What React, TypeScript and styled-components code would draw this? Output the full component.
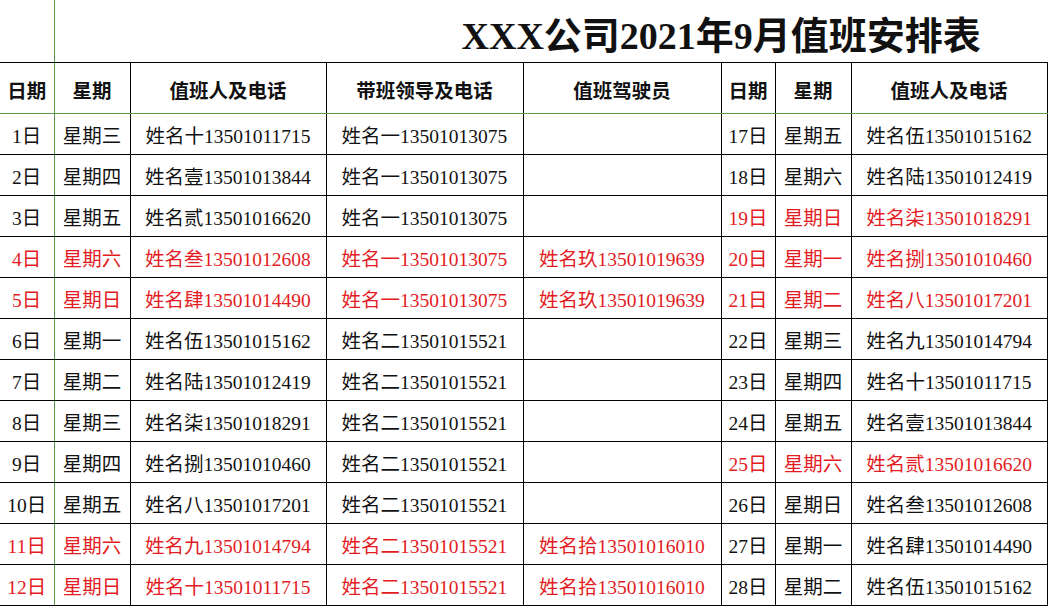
import styled, { createGlobalStyle } from "styled-components";

const GREEN = "#5b9a47";
const RED = "#e31c24";
const INK = "#111";

const GlobalStyle = createGlobalStyle`
  body {
    margin: 0;
    background: #fff;
  }
`;

const Sheet = styled.table`
  border-collapse: collapse;
  table-layout: fixed;
  width: 1047px;
  font-family: "Liberation Serif", "Noto Sans CJK SC", serif;
  color: ${INK};
`;

const TitleRow = styled.tr`
  height: 62px;
`;

const HeadRow = styled.tr`
  height: 51px;
`;

const BodyRow = styled.tr`
  height: 41px;
`;

const Corner = styled.td`
  padding: 0;
  border-right: 1px solid ${GREEN};
  border-bottom: 1px solid #000;
`;

const TitleCell = styled.td`
  padding: 0 0 0 407px;
  border-bottom: 1px solid #000;
  font-family: "Liberation Serif", "Noto Sans CJK SC", serif;
  font-weight: 700;
  font-size: 38px;
  white-space: nowrap;
  vertical-align: middle;
  padding-top: 4px;
`;

const HeadCell = styled.th<{ $first?: boolean }>`
  padding: 4px 0 0;
  border: 1px solid #000;
  border-left: ${({ $first }) => ($first ? "none" : "1px solid #000")};
  border-right: ${({ $first }) => ($first ? `1px solid ${GREEN}` : "1px solid #000")};
  border-bottom: 1px solid ${GREEN};
  font-family: "Noto Sans CJK SC", sans-serif;
  font-weight: 700;
  font-size: 19.5px;
  text-align: center;
  white-space: nowrap;
`;

const Cell = styled.td<{ $first?: boolean; $red?: boolean }>`
  padding: 1px 0 0;
  border: 1px solid #000;
  border-left: ${({ $first }) => ($first ? "none" : "1px solid #000")};
  border-right: ${({ $first }) => ($first ? `1px solid ${GREEN}` : "1px solid #000")};
  color: ${({ $red }) => ($red ? RED : INK)};
  font-size: 19.5px;
  text-align: center;
  white-space: nowrap;
  overflow: hidden;
`;

const widths = [54, 76, 196, 197, 198, 54, 76, 196];
const headers = ["日期", "星期", "值班人及电话", "带班领导及电话", "值班驾驶员", "日期", "星期", "值班人及电话"];

type Day = [string, string, string];
interface Row {
  left: Day;
  leader: string;
  driver: string;
  leftRed: boolean;
  right: Day;
  rightRed: boolean;
}

const rows: Row[] = [
  { left: ["1日", "星期三", "姓名十13501011715"], leader: "姓名一13501013075", driver: "", leftRed: false, right: ["17日", "星期五", "姓名伍13501015162"], rightRed: false },
  { left: ["2日", "星期四", "姓名壹13501013844"], leader: "姓名一13501013075", driver: "", leftRed: false, right: ["18日", "星期六", "姓名陆13501012419"], rightRed: false },
  { left: ["3日", "星期五", "姓名贰13501016620"], leader: "姓名一13501013075", driver: "", leftRed: false, right: ["19日", "星期日", "姓名柒13501018291"], rightRed: true },
  { left: ["4日", "星期六", "姓名叁13501012608"], leader: "姓名一13501013075", driver: "姓名玖13501019639", leftRed: true, right: ["20日", "星期一", "姓名捌13501010460"], rightRed: true },
  { left: ["5日", "星期日", "姓名肆13501014490"], leader: "姓名一13501013075", driver: "姓名玖13501019639", leftRed: true, right: ["21日", "星期二", "姓名八13501017201"], rightRed: true },
  { left: ["6日", "星期一", "姓名伍13501015162"], leader: "姓名二13501015521", driver: "", leftRed: false, right: ["22日", "星期三", "姓名九13501014794"], rightRed: false },
  { left: ["7日", "星期二", "姓名陆13501012419"], leader: "姓名二13501015521", driver: "", leftRed: false, right: ["23日", "星期四", "姓名十13501011715"], rightRed: false },
  { left: ["8日", "星期三", "姓名柒13501018291"], leader: "姓名二13501015521", driver: "", leftRed: false, right: ["24日", "星期五", "姓名壹13501013844"], rightRed: false },
  { left: ["9日", "星期四", "姓名捌13501010460"], leader: "姓名二13501015521", driver: "", leftRed: false, right: ["25日", "星期六", "姓名贰13501016620"], rightRed: true },
  { left: ["10日", "星期五", "姓名八13501017201"], leader: "姓名二13501015521", driver: "", leftRed: false, right: ["26日", "星期日", "姓名叁13501012608"], rightRed: false },
  { left: ["11日", "星期六", "姓名九13501014794"], leader: "姓名二13501015521", driver: "姓名拾13501016010", leftRed: true, right: ["27日", "星期一", "姓名肆13501014490"], rightRed: false },
  { left: ["12日", "星期日", "姓名十13501011715"], leader: "姓名二13501015521", driver: "姓名拾13501016010", leftRed: true, right: ["28日", "星期二", "姓名伍13501015162"], rightRed: false },
];

export default function App() {
  return (
    <>
      <GlobalStyle />
      <Sheet>
        <colgroup>
          {widths.map((w, i) => (
            <col key={i} style={{ width: w }} />
          ))}
        </colgroup>
        <tbody>
          <TitleRow>
            <Corner />
            <TitleCell colSpan={7}>XXX公司2021年9月值班安排表</TitleCell>
          </TitleRow>
          <HeadRow>
            {headers.map((h, i) => (
              <HeadCell key={i} $first={i === 0}>
                {h}
              </HeadCell>
            ))}
          </HeadRow>
          {rows.map((r) => (
            <BodyRow key={r.left[0]}>
              <Cell $first $red={r.leftRed}>{r.left[0]}</Cell>
              <Cell $red={r.leftRed}>{r.left[1]}</Cell>
              <Cell $red={r.leftRed}>{r.left[2]}</Cell>
              <Cell $red={r.leftRed}>{r.leader}</Cell>
              <Cell $red={r.leftRed}>{r.driver}</Cell>
              <Cell $red={r.rightRed}>{r.right[0]}</Cell>
              <Cell $red={r.rightRed}>{r.right[1]}</Cell>
              <Cell $red={r.rightRed}>{r.right[2]}</Cell>
            </BodyRow>
          ))}
        </tbody>
      </Sheet>
    </>
  );
}
